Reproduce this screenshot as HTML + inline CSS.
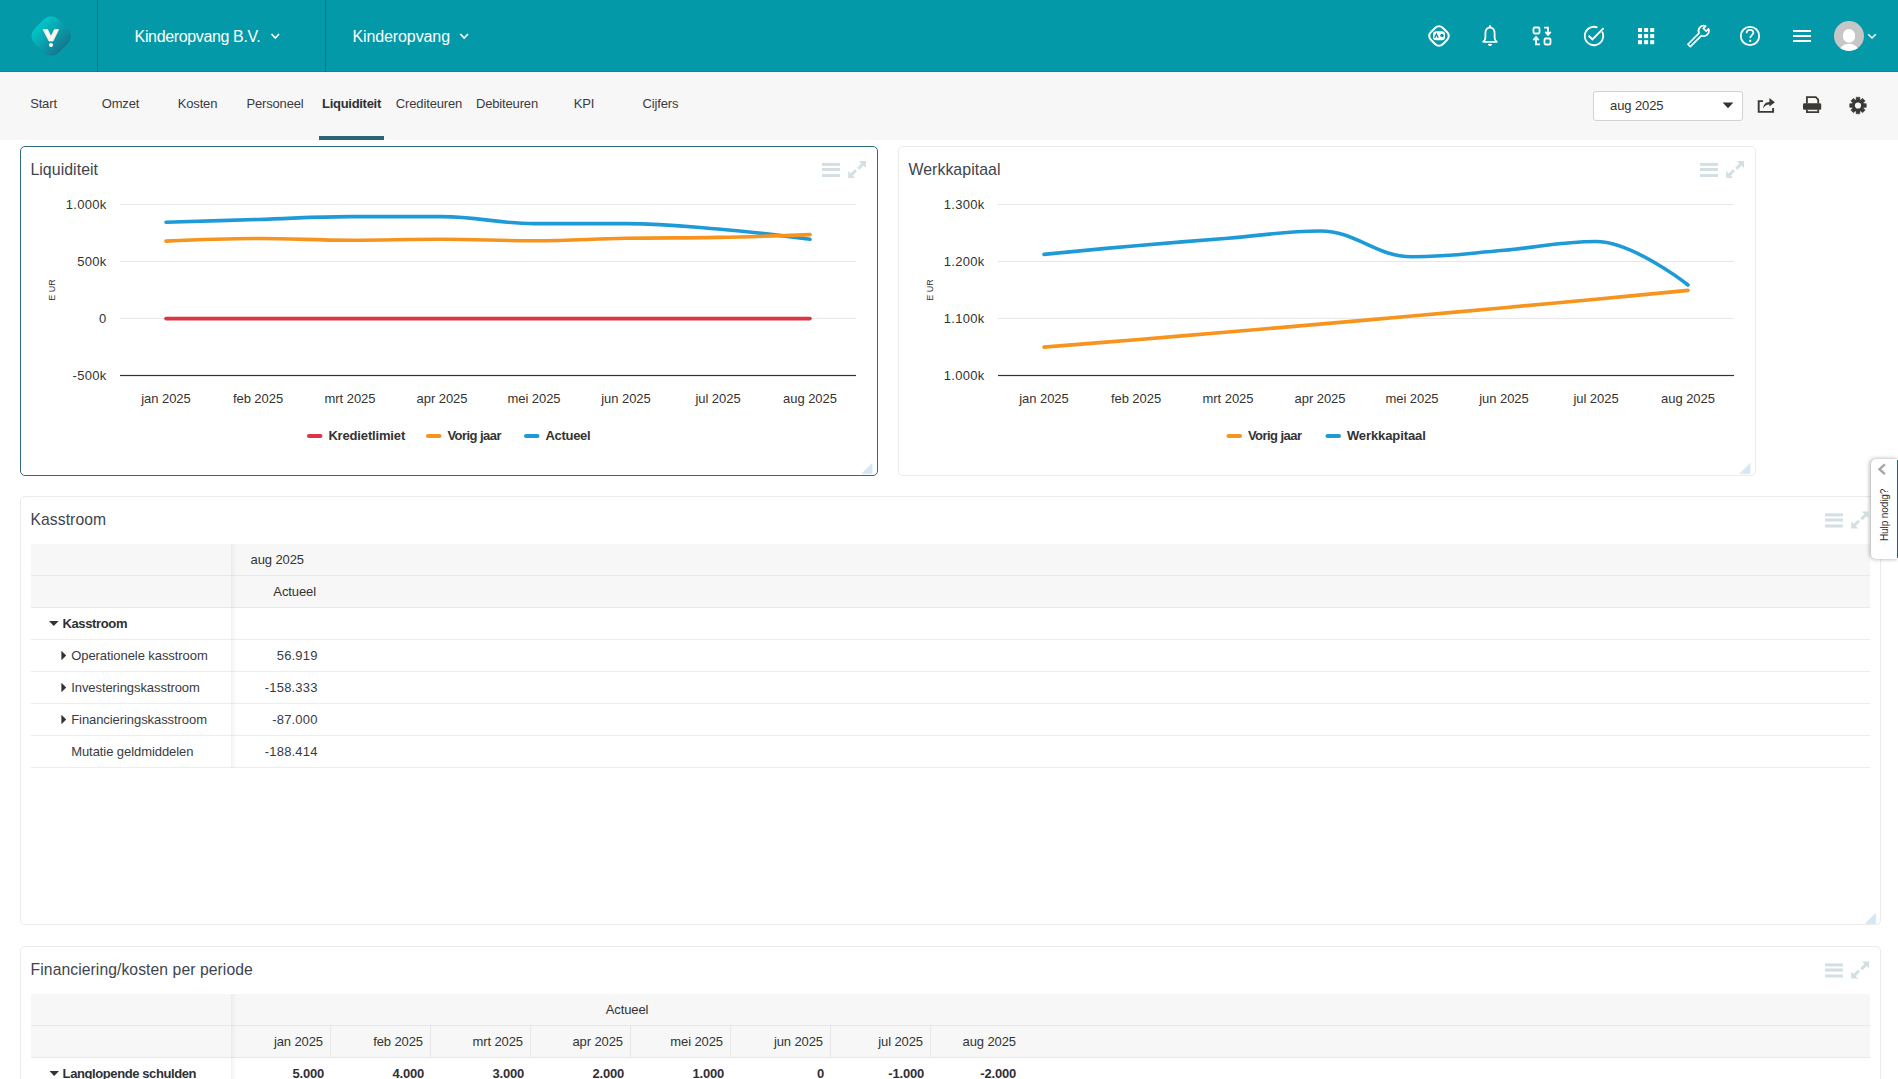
<!DOCTYPE html>
<html><head><meta charset="utf-8"><title>Liquiditeit</title>
<style>
html,body{margin:0;padding:0;width:1898px;height:1079px;overflow:hidden;background:#fff;font-family:"Liberation Sans", sans-serif;}
svg text{font-family:"Liberation Sans", sans-serif;}
</style></head><body>
<div style="position:absolute;left:0px;top:0px;width:1898px;height:72px;background:#0399A9"></div>
<div style="position:absolute;left:0px;top:71px;width:1898px;height:1px;background:#058C9B"></div>
<div style="position:absolute;left:97px;top:0px;width:1px;height:72px;background:#087585"></div>
<div style="position:absolute;left:325px;top:0px;width:1px;height:72px;background:#087585"></div>
<div style="position:absolute;left:0px;top:72px;width:1898px;height:68px;background:#F7F7F7"></div>
<div style="position:absolute;left:319px;top:136px;width:65px;height:4px;background:#2B6572"></div>
<div style="position:absolute;left:1593px;top:91px;width:150px;height:30px;background:#fff;border:1px solid #D2D2D2;border-radius:3px;box-sizing:border-box"></div>
<div style="position:absolute;left:20px;top:146px;width:858px;height:330px;border:1px solid #2F6C7B;border-radius:5px;box-sizing:border-box;background:#fff"></div>
<div style="position:absolute;left:898px;top:146px;width:858px;height:330px;border:1px solid #EBEBEB;border-radius:5px;box-sizing:border-box;background:#fff"></div>
<div style="position:absolute;left:20px;top:496px;width:1861px;height:429px;border:1px solid #EBEBEB;border-radius:5px;box-sizing:border-box;background:#fff"></div>
<div style="position:absolute;left:20px;top:946px;width:1861px;height:200px;border:1px solid #EBEBEB;border-radius:5px;box-sizing:border-box;background:#fff"></div>
<div style="position:absolute;left:31px;top:544px;width:1839px;height:64px;background:#F7F7F7"></div>
<div style="position:absolute;left:31px;top:575px;width:1839px;height:1px;background:#E8E8E8"></div>
<div style="position:absolute;left:31px;top:607px;width:1839px;height:1px;background:#E8E8E8"></div>
<div style="position:absolute;left:31px;top:639px;width:1839px;height:1px;background:#EDEDED"></div>
<div style="position:absolute;left:31px;top:671px;width:1839px;height:1px;background:#EDEDED"></div>
<div style="position:absolute;left:31px;top:703px;width:1839px;height:1px;background:#EDEDED"></div>
<div style="position:absolute;left:31px;top:735px;width:1839px;height:1px;background:#EDEDED"></div>
<div style="position:absolute;left:31px;top:767px;width:1839px;height:1px;background:#EDEDED"></div>
<div style="position:absolute;left:231px;top:544px;width:6px;height:224px;background:linear-gradient(to right,rgba(0,0,0,0.055),rgba(0,0,0,0.025) 40%,rgba(0,0,0,0))"></div>
<div style="position:absolute;left:31px;top:994px;width:1839px;height:64px;background:#F7F7F7"></div>
<div style="position:absolute;left:31px;top:1025px;width:1839px;height:1px;background:#E8E8E8"></div>
<div style="position:absolute;left:31px;top:1057px;width:1839px;height:1px;background:#E8E8E8"></div>
<div style="position:absolute;left:231px;top:994px;width:6px;height:90px;background:linear-gradient(to right,rgba(0,0,0,0.055),rgba(0,0,0,0.025) 40%,rgba(0,0,0,0))"></div>
<div style="position:absolute;left:330px;top:1026px;width:1px;height:31px;background:#E8E8E8"></div>
<div style="position:absolute;left:430px;top:1026px;width:1px;height:31px;background:#E8E8E8"></div>
<div style="position:absolute;left:530px;top:1026px;width:1px;height:31px;background:#E8E8E8"></div>
<div style="position:absolute;left:630px;top:1026px;width:1px;height:31px;background:#E8E8E8"></div>
<div style="position:absolute;left:730px;top:1026px;width:1px;height:31px;background:#E8E8E8"></div>
<div style="position:absolute;left:830px;top:1026px;width:1px;height:31px;background:#E8E8E8"></div>
<div style="position:absolute;left:930px;top:1026px;width:1px;height:31px;background:#E8E8E8"></div>
<div style="position:absolute;left:1871px;top:459px;width:27px;height:100px;background:#fff;border-radius:5px 0 0 5px;box-shadow:-1px 0 4px rgba(0,0,0,0.35)"></div>
<div style="position:absolute;left:1896.5px;top:460px;width:1.5px;height:98px;background:#1C6574"></div>
<svg style="position:absolute;left:0;top:0" width="1898" height="1079" viewBox="0 0 1898 1079">
<defs>
<linearGradient id="lg" x1="0" y1="0" x2="1" y2="0">
<stop offset="0" stop-color="#00C6C8"/><stop offset="1" stop-color="#14788F"/></linearGradient>
</defs>
<rect x="34" y="19" width="34" height="34" rx="10.5" transform="rotate(45 51 36.2)" fill="url(#lg)"/>
<path d="M43.2 29.6 H47.6 L51 36.6 L54.4 29.6 H58.6 L53 41 H49 Z" fill="#FBF6EE" stroke="#FBF6EE" stroke-width="0.8" stroke-linejoin="round"/>
<circle cx="51" cy="45" r="2.1" fill="#FBF6EE"/>
<text x="134.6" y="42" font-size="16" fill="#fff" text-anchor="start" font-weight="normal" letter-spacing="-0.36" >Kinderopvang B.V.</text>
<polyline points="271.5,34 275.3,38 279,34" fill="none" stroke="#fff" stroke-width="1.6"/>
<text x="352.4" y="42" font-size="16" fill="#fff" text-anchor="start" font-weight="normal" letter-spacing="-0.1" >Kinderopvang</text>
<polyline points="460.3,34 464.2,38 468,34" fill="none" stroke="#fff" stroke-width="1.6"/>
<rect x="1430.6" y="27.6" width="16.8" height="16.8" rx="5.2" transform="rotate(45 1439 36)" fill="none" stroke="#fff" stroke-width="2"/>
<rect x="1433" y="31.2" width="12" height="9" rx="3.2" fill="#fff"/>
<polyline points="1434.6,37.9 1436.4,34.1 1438.2,37.9" fill="none" stroke="#0399A9" stroke-width="1.3"/>
<circle cx="1442" cy="35.5" r="1.8" fill="#0399A9"/>
<path d="M1490 27.6 C1487.1 27.6 1485.4 30 1485.4 33.6 V37.4 C1485.4 39.6 1484.4 40.9 1483.2 41.8 H1496.8 C1495.6 40.9 1494.6 39.6 1494.6 37.4 V33.6 C1494.6 30 1492.9 27.6 1490 27.6 Z" fill="none" stroke="#fff" stroke-width="1.8" stroke-linejoin="round"/>
<circle cx="1490" cy="26.5" r="1.2" fill="#fff"/>
<path d="M1488 44.4 H1492 L1490 45.9 Z" fill="#fff" stroke="#fff" stroke-width="1" stroke-linejoin="round"/>
<rect x="1533.5" y="27.5" width="6" height="6" rx="1.2" fill="none" stroke="#fff" stroke-width="1.8"/>
<rect x="1544.5" y="38.5" width="6" height="6" rx="1.2" fill="none" stroke="#fff" stroke-width="1.8"/>
<path d="M1544 27.6 H1548 V33.5" fill="none" stroke="#fff" stroke-width="1.8"/>
<path d="M1545.3 31.8 L1548 34.8 L1550.7 31.8" fill="none" stroke="#fff" stroke-width="1.8"/>
<path d="M1540 44.4 H1536 V38.5" fill="none" stroke="#fff" stroke-width="1.8"/>
<path d="M1533.3 40.2 L1536 37.2 L1538.7 40.2" fill="none" stroke="#fff" stroke-width="1.8"/>
<path d="M1602.12 31.68 A9.2 9.2 0 1 1 1597.45 27.47" fill="none" stroke="#fff" stroke-width="1.8"/>
<polyline points="1588.6,35.6 1592.4,39.4 1603.6,28.2" fill="none" stroke="#fff" stroke-width="1.9"/>
<rect x="1638.0" y="28.0" width="4" height="4" fill="#fff"/>
<rect x="1638.0" y="34.1" width="4" height="4" fill="#fff"/>
<rect x="1638.0" y="40.2" width="4" height="4" fill="#fff"/>
<rect x="1644.1" y="28.0" width="4" height="4" fill="#fff"/>
<rect x="1644.1" y="34.1" width="4" height="4" fill="#fff"/>
<rect x="1644.1" y="40.2" width="4" height="4" fill="#fff"/>
<rect x="1650.2" y="28.0" width="4" height="4" fill="#fff"/>
<rect x="1650.2" y="34.1" width="4" height="4" fill="#fff"/>
<rect x="1650.2" y="40.2" width="4" height="4" fill="#fff"/>
<g transform="translate(1703.7 30.9) rotate(45)"><path d="M-1.7 20.6 V4.9 A5.2 5.2 0 0 1 -2 -4.8 V-1.5 H2 V-4.8 A5.2 5.2 0 0 1 1.7 4.9 V20.6 Z" fill="none" stroke="#fff" stroke-width="1.7" stroke-linejoin="round"/></g>
<circle cx="1750" cy="36" r="9.2" fill="none" stroke="#fff" stroke-width="1.8"/>
<path d="M1746.6 33.2 C1746.6 31 1748.2 29.8 1750 29.8 C1752 29.8 1753.4 31.1 1753.4 32.8 C1753.4 35 1750.2 35.4 1750.2 38" fill="none" stroke="#fff" stroke-width="1.7"/>
<rect x="1749.2" y="39.8" width="2" height="2" fill="#fff"/>
<rect x="1793" y="30" width="18" height="2" fill="#fff"/>
<rect x="1793" y="35" width="18" height="2" fill="#fff"/>
<rect x="1793" y="40" width="18" height="2" fill="#fff"/>
<clipPath id="av"><circle cx="1849" cy="36" r="15"/></clipPath>
<circle cx="1849" cy="36" r="15" fill="#C6C6C6"/>
<g clip-path="url(#av)"><ellipse cx="1849" cy="35.9" rx="6.2" ry="6.9" fill="#fff"/><ellipse cx="1849" cy="51.6" rx="9.6" ry="7.8" fill="#fff"/></g>
<polyline points="1868.2,34.2 1872,38 1875.8,34.2" fill="none" stroke="#fff" stroke-width="1.5"/>
<text x="43.5" y="108.2" font-size="13" fill="#3A3B42" text-anchor="middle" font-weight="normal" letter-spacing="-0.15" >Start</text>
<text x="120.5" y="108.2" font-size="13" fill="#3A3B42" text-anchor="middle" font-weight="normal" letter-spacing="-0.15" >Omzet</text>
<text x="197.5" y="108.2" font-size="13" fill="#3A3B42" text-anchor="middle" font-weight="normal" letter-spacing="-0.15" >Kosten</text>
<text x="275" y="108.2" font-size="13" fill="#3A3B42" text-anchor="middle" font-weight="normal" letter-spacing="-0.15" >Personeel</text>
<text x="351.5" y="108.2" font-size="13" fill="#2F3036" text-anchor="middle" font-weight="bold" letter-spacing="-0.28" >Liquiditeit</text>
<text x="429" y="108.2" font-size="13" fill="#3A3B42" text-anchor="middle" font-weight="normal" letter-spacing="-0.15" >Crediteuren</text>
<text x="507" y="108.2" font-size="13" fill="#3A3B42" text-anchor="middle" font-weight="normal" letter-spacing="-0.15" >Debiteuren</text>
<text x="584" y="108.2" font-size="13" fill="#3A3B42" text-anchor="middle" font-weight="normal" letter-spacing="-0.15" >KPI</text>
<text x="660.5" y="108.2" font-size="13" fill="#3A3B42" text-anchor="middle" font-weight="normal" letter-spacing="-0.15" >Cijfers</text>
<text x="1610" y="110" font-size="13" fill="#333" text-anchor="start" font-weight="normal" letter-spacing="-0.1" >aug 2025</text>
<path d="M1722.6 102.6 H1733.4 L1728 108.2 Z" fill="#333"/>
<path d="M1763 101.1 H1758.7 V111.9 H1773.1 V108" fill="none" stroke="#3B3A34" stroke-width="1.9"/>
<path d="M1763.2 108.4 C1763.4 104.4 1765.6 102.3 1769.4 102 V98 L1774.9 102.3 L1769.4 106.6 V104.4 C1766.6 104.5 1764.6 105.8 1763.2 108.4 Z" fill="#3B3A34"/>
<path d="M1806.9 103.6 V97.2 H1815.8 L1818.2 99.6 V103.6" fill="none" stroke="#3B3A34" stroke-width="1.8" stroke-linejoin="miter"/>
<rect x="1803" y="103.2" width="18.2" height="6.6" rx="1.4" fill="#3B3A34"/>
<path d="M1806.9 109.4 V112.2 H1818.2 V109.4" fill="none" stroke="#3B3A34" stroke-width="1.8"/>
<polygon points="1856.05,99.83 1856.16,97.20 1859.84,97.20 1859.95,99.83 1860.63,100.11 1862.57,98.33 1865.17,100.93 1863.39,102.87 1863.67,103.55 1866.30,103.66 1866.30,107.34 1863.67,107.45 1863.39,108.13 1865.17,110.07 1862.57,112.67 1860.63,110.89 1859.95,111.17 1859.84,113.80 1856.16,113.80 1856.05,111.17 1855.37,110.89 1853.43,112.67 1850.83,110.07 1852.61,108.13 1852.33,107.45 1849.70,107.34 1849.70,103.66 1852.33,103.55 1852.61,102.87 1850.83,100.93 1853.43,98.33 1855.37,100.11" fill="#3B3A34" stroke="#3B3A34" stroke-width="0.5" stroke-linejoin="round"/>
<circle cx="1858" cy="105.5" r="3.1" fill="#F7F7F7"/>
<text x="30.4" y="175" font-size="15.9" fill="#3E4450" text-anchor="start" font-weight="normal" letter-spacing="0.05" >Liquiditeit</text>
<rect x="822" y="162.9" width="18" height="3" fill="#D3DFE2"/>
<rect x="822" y="168.0" width="18" height="3" fill="#D3DFE2"/>
<rect x="822" y="174.0" width="18" height="3" fill="#D3DFE2"/>
<g transform="translate(0 0.0)" fill="#D3DFE2"><path d="M858.9 161 H866 V168 Z"/><path d="M848.2 171 V178 H855.2 Z"/><path d="M863.6 163.4 L858.3 168.7 M850.6 175.6 L855.9 170.3" stroke="#D3DFE2" stroke-width="3"/></g>
<text x="106.6" y="209.0" font-size="13" fill="#333" text-anchor="end" font-weight="normal" letter-spacing="0.3" >1.000k</text>
<rect x="120" y="203.9" width="736" height="1" fill="#E6E6E6"/>
<text x="106.6" y="266.0" font-size="13" fill="#333" text-anchor="end" font-weight="normal" letter-spacing="0.3" >500k</text>
<rect x="120" y="260.9" width="736" height="1" fill="#E6E6E6"/>
<text x="106.6" y="323.0" font-size="13" fill="#333" text-anchor="end" font-weight="normal" letter-spacing="0.3" >0</text>
<rect x="120" y="317.9" width="736" height="1" fill="#E6E6E6"/>
<text x="106.6" y="380.0" font-size="13" fill="#333" text-anchor="end" font-weight="normal" letter-spacing="0.3" >-500k</text>
<rect x="120" y="374.9" width="736" height="1.2" fill="#333"/>
<text transform="translate(55.2 290) rotate(-90)" font-size="9" fill="#333" text-anchor="middle" letter-spacing="0">E UR</text>
<text x="166" y="403" font-size="13" fill="#333" text-anchor="middle" font-weight="normal" letter-spacing="-0.05" >jan 2025</text>
<text x="258" y="403" font-size="13" fill="#333" text-anchor="middle" font-weight="normal" letter-spacing="-0.05" >feb 2025</text>
<text x="350" y="403" font-size="13" fill="#333" text-anchor="middle" font-weight="normal" letter-spacing="-0.05" >mrt 2025</text>
<text x="442" y="403" font-size="13" fill="#333" text-anchor="middle" font-weight="normal" letter-spacing="-0.05" >apr 2025</text>
<text x="534" y="403" font-size="13" fill="#333" text-anchor="middle" font-weight="normal" letter-spacing="-0.05" >mei 2025</text>
<text x="626" y="403" font-size="13" fill="#333" text-anchor="middle" font-weight="normal" letter-spacing="-0.05" >jun 2025</text>
<text x="718" y="403" font-size="13" fill="#333" text-anchor="middle" font-weight="normal" letter-spacing="-0.05" >jul 2025</text>
<text x="810" y="403" font-size="13" fill="#333" text-anchor="middle" font-weight="normal" letter-spacing="-0.05" >aug 2025</text>
<path d="M166 318.6 H810" stroke="#DC3545" stroke-width="3.6" stroke-linecap="round"/>
<path d="M 166.0 222.3 C 166.0 222.3 221.2 220.6 258.0 219.5 C 294.8 218.4 313.2 216.6 350.0 216.6 C 386.8 216.6 405.2 216.6 442.0 216.6 C 478.8 216.6 497.2 223.6 534.0 223.6 C 570.8 223.6 589.2 223.6 626.0 223.6 C 662.8 223.6 681.2 225.9 718.0 229.0 C 754.8 232.1 810.0 239.3 810.0 239.3" fill="none" stroke="#1E9BD7" stroke-width="3.6" stroke-linecap="round"/>
<path d="M 166.0 241.1 C 166.0 241.1 221.2 238.5 258.0 238.5 C 294.8 238.5 313.2 240.2 350.0 240.2 C 386.8 240.2 405.2 239.3 442.0 239.3 C 478.8 239.3 497.2 240.7 534.0 240.7 C 570.8 240.7 589.2 239.0 626.0 238.3 C 662.8 237.6 681.2 238.1 718.0 237.4 C 754.8 236.7 810.0 234.6 810.0 234.6" fill="none" stroke="#F7941D" stroke-width="3.6" stroke-linecap="round"/>
<path d="M309 435.9 H320.5" stroke="#DC3545" stroke-width="4" stroke-linecap="round"/>
<text x="328.4" y="440.2" font-size="13" fill="#333" text-anchor="start" font-weight="bold" letter-spacing="-0.16" >Kredietlimiet</text>
<path d="M428 435.9 H439.5" stroke="#F7941D" stroke-width="4" stroke-linecap="round"/>
<text x="447.4" y="440.2" font-size="13" fill="#333" text-anchor="start" font-weight="bold" letter-spacing="-0.55" >Vorig jaar</text>
<path d="M526 435.9 H537.5" stroke="#1E9BD7" stroke-width="4" stroke-linecap="round"/>
<text x="545.4" y="440.2" font-size="13" fill="#333" text-anchor="start" font-weight="bold" letter-spacing="-0.28" >Actueel</text>
<path d="M872 463.6 V473.6 H862 Z" fill="#D3E7F5" stroke="#D3E7F5" stroke-width="0.8" stroke-linejoin="round"/>
<text x="908.4" y="175" font-size="15.9" fill="#3E4450" text-anchor="start" font-weight="normal" letter-spacing="0.05" >Werkkapitaal</text>
<rect x="1700" y="162.9" width="18" height="3" fill="#D3DFE2"/>
<rect x="1700" y="168.0" width="18" height="3" fill="#D3DFE2"/>
<rect x="1700" y="174.0" width="18" height="3" fill="#D3DFE2"/>
<g transform="translate(878 0.0)" fill="#D3DFE2"><path d="M858.9 161 H866 V168 Z"/><path d="M848.2 171 V178 H855.2 Z"/><path d="M863.6 163.4 L858.3 168.7 M850.6 175.6 L855.9 170.3" stroke="#D3DFE2" stroke-width="3"/></g>
<text x="984.6" y="209.0" font-size="13" fill="#333" text-anchor="end" font-weight="normal" letter-spacing="0.3" >1.300k</text>
<rect x="998" y="203.9" width="736" height="1" fill="#E6E6E6"/>
<text x="984.6" y="266.0" font-size="13" fill="#333" text-anchor="end" font-weight="normal" letter-spacing="0.3" >1.200k</text>
<rect x="998" y="260.9" width="736" height="1" fill="#E6E6E6"/>
<text x="984.6" y="323.0" font-size="13" fill="#333" text-anchor="end" font-weight="normal" letter-spacing="0.3" >1.100k</text>
<rect x="998" y="317.9" width="736" height="1" fill="#E6E6E6"/>
<text x="984.6" y="380.0" font-size="13" fill="#333" text-anchor="end" font-weight="normal" letter-spacing="0.3" >1.000k</text>
<rect x="998" y="374.9" width="736" height="1.2" fill="#333"/>
<text transform="translate(933.2 290) rotate(-90)" font-size="9" fill="#333" text-anchor="middle" letter-spacing="0">E UR</text>
<text x="1044" y="403" font-size="13" fill="#333" text-anchor="middle" font-weight="normal" letter-spacing="-0.05" >jan 2025</text>
<text x="1136" y="403" font-size="13" fill="#333" text-anchor="middle" font-weight="normal" letter-spacing="-0.05" >feb 2025</text>
<text x="1228" y="403" font-size="13" fill="#333" text-anchor="middle" font-weight="normal" letter-spacing="-0.05" >mrt 2025</text>
<text x="1320" y="403" font-size="13" fill="#333" text-anchor="middle" font-weight="normal" letter-spacing="-0.05" >apr 2025</text>
<text x="1412" y="403" font-size="13" fill="#333" text-anchor="middle" font-weight="normal" letter-spacing="-0.05" >mei 2025</text>
<text x="1504" y="403" font-size="13" fill="#333" text-anchor="middle" font-weight="normal" letter-spacing="-0.05" >jun 2025</text>
<text x="1596" y="403" font-size="13" fill="#333" text-anchor="middle" font-weight="normal" letter-spacing="-0.05" >jul 2025</text>
<text x="1688" y="403" font-size="13" fill="#333" text-anchor="middle" font-weight="normal" letter-spacing="-0.05" >aug 2025</text>
<path d="M 1044.0 254.4 C 1044.0 254.4 1099.2 248.9 1136.0 245.7 C 1172.8 242.5 1191.2 241.2 1228.0 238.3 C 1264.8 235.4 1283.2 231.0 1320.0 231.0 C 1356.8 231.0 1375.2 256.8 1412.0 256.8 C 1448.8 256.8 1467.2 253.4 1504.0 250.3 C 1540.8 247.2 1559.2 241.5 1596.0 241.5 C 1632.8 241.5 1688.0 285.0 1688.0 285.0" fill="none" stroke="#1E9BD7" stroke-width="3.6" stroke-linecap="round"/>
<path d="M 1044.0 347.1 C 1044.0 347.1 1099.2 342.7 1136.0 339.7 C 1172.8 336.6 1191.2 335.1 1228.0 332.0 C 1264.8 328.9 1283.2 327.3 1320.0 324.1 C 1356.8 320.9 1375.2 319.3 1412.0 316.0 C 1448.8 312.7 1467.2 311.1 1504.0 307.7 C 1540.8 304.3 1559.2 302.6 1596.0 299.2 C 1632.8 295.7 1688.0 290.4 1688.0 290.4" fill="none" stroke="#F7941D" stroke-width="3.6" stroke-linecap="round"/>
<path d="M1228.5 435.9 H1240.0" stroke="#F7941D" stroke-width="4" stroke-linecap="round"/>
<text x="1247.9" y="440.2" font-size="13" fill="#333" text-anchor="start" font-weight="bold" letter-spacing="-0.55" >Vorig jaar</text>
<path d="M1327.5 435.9 H1339.0" stroke="#1E9BD7" stroke-width="4" stroke-linecap="round"/>
<text x="1346.9" y="440.2" font-size="13" fill="#333" text-anchor="start" font-weight="bold" letter-spacing="-0.1" >Werkkapitaal</text>
<path d="M1750 463.6 V473.6 H1740 Z" fill="#D3E7F5" stroke="#D3E7F5" stroke-width="0.8" stroke-linejoin="round"/>
<text x="30.4" y="525" font-size="15.7" fill="#3E4450" text-anchor="start" font-weight="normal" letter-spacing="0.1" >Kasstroom</text>
<rect x="1825" y="513.4" width="18" height="3" fill="#D3DFE2"/>
<rect x="1825" y="518.5" width="18" height="3" fill="#D3DFE2"/>
<rect x="1825" y="524.5" width="18" height="3" fill="#D3DFE2"/>
<g transform="translate(1003 350.5)" fill="#D3DFE2"><path d="M858.9 161 H866 V168 Z"/><path d="M848.2 171 V178 H855.2 Z"/><path d="M863.6 163.4 L858.3 168.7 M850.6 175.6 L855.9 170.3" stroke="#D3DFE2" stroke-width="3"/></g>
<path d="M1875.6 913.4 V923.4 H1865.6 Z" fill="#D3E7F5" stroke="#D3E7F5" stroke-width="0.8" stroke-linejoin="round"/>
<text x="250.5" y="564" font-size="13" fill="#333" text-anchor="start" font-weight="normal" letter-spacing="-0.1" >aug 2025</text>
<text x="316" y="596" font-size="13" fill="#333" text-anchor="end" font-weight="normal" letter-spacing="-0.1" >Actueel</text>
<path d="M49 621 H58.6 L53.8 626 Z" fill="#333"/>
<text x="62.4" y="628" font-size="13" fill="#2F3036" text-anchor="start" font-weight="bold" letter-spacing="-0.35" >Kasstroom</text>
<path d="M61.4 650.7 V660.3 L66.2 655.5 Z" fill="#333"/>
<text x="71.2" y="660" font-size="13" fill="#3A3B42" text-anchor="start" font-weight="normal" letter-spacing="-0.07" >Operationele kasstroom</text>
<text x="317.6" y="660" font-size="13" fill="#3A3B42" text-anchor="end" font-weight="normal" letter-spacing="0.18" >56.919</text>
<path d="M61.4 682.7 V692.3 L66.2 687.5 Z" fill="#333"/>
<text x="71.2" y="692" font-size="13" fill="#3A3B42" text-anchor="start" font-weight="normal" letter-spacing="-0.07" >Investeringskasstroom</text>
<text x="317.6" y="692" font-size="13" fill="#3A3B42" text-anchor="end" font-weight="normal" letter-spacing="0.18" >-158.333</text>
<path d="M61.4 714.7 V724.3 L66.2 719.5 Z" fill="#333"/>
<text x="71.2" y="724" font-size="13" fill="#3A3B42" text-anchor="start" font-weight="normal" letter-spacing="-0.07" >Financieringskasstroom</text>
<text x="317.6" y="724" font-size="13" fill="#3A3B42" text-anchor="end" font-weight="normal" letter-spacing="0.18" >-87.000</text>
<text x="71.2" y="756" font-size="13" fill="#3A3B42" text-anchor="start" font-weight="normal" letter-spacing="-0.07" >Mutatie geldmiddelen</text>
<text x="317.6" y="756" font-size="13" fill="#3A3B42" text-anchor="end" font-weight="normal" letter-spacing="0.18" >-188.414</text>
<text x="30.6" y="975" font-size="15.7" fill="#3E4450" text-anchor="start" font-weight="normal" letter-spacing="0.08" >Financiering/kosten per periode</text>
<rect x="1825" y="963.4" width="18" height="3" fill="#D3DFE2"/>
<rect x="1825" y="968.5" width="18" height="3" fill="#D3DFE2"/>
<rect x="1825" y="974.5" width="18" height="3" fill="#D3DFE2"/>
<g transform="translate(1003 800.5)" fill="#D3DFE2"><path d="M858.9 161 H866 V168 Z"/><path d="M848.2 171 V178 H855.2 Z"/><path d="M863.6 163.4 L858.3 168.7 M850.6 175.6 L855.9 170.3" stroke="#D3DFE2" stroke-width="3"/></g>
<text x="627" y="1014" font-size="13" fill="#333" text-anchor="middle" font-weight="normal" letter-spacing="-0.1" >Actueel</text>
<text x="323" y="1046" font-size="13" fill="#333" text-anchor="end" font-weight="normal" letter-spacing="-0.1" >jan 2025</text>
<text x="324" y="1078" font-size="13" fill="#2F3036" text-anchor="end" font-weight="bold" letter-spacing="-0.2" >5.000</text>
<text x="423" y="1046" font-size="13" fill="#333" text-anchor="end" font-weight="normal" letter-spacing="-0.1" >feb 2025</text>
<text x="424" y="1078" font-size="13" fill="#2F3036" text-anchor="end" font-weight="bold" letter-spacing="-0.2" >4.000</text>
<text x="523" y="1046" font-size="13" fill="#333" text-anchor="end" font-weight="normal" letter-spacing="-0.1" >mrt 2025</text>
<text x="524" y="1078" font-size="13" fill="#2F3036" text-anchor="end" font-weight="bold" letter-spacing="-0.2" >3.000</text>
<text x="623" y="1046" font-size="13" fill="#333" text-anchor="end" font-weight="normal" letter-spacing="-0.1" >apr 2025</text>
<text x="624" y="1078" font-size="13" fill="#2F3036" text-anchor="end" font-weight="bold" letter-spacing="-0.2" >2.000</text>
<text x="723" y="1046" font-size="13" fill="#333" text-anchor="end" font-weight="normal" letter-spacing="-0.1" >mei 2025</text>
<text x="724" y="1078" font-size="13" fill="#2F3036" text-anchor="end" font-weight="bold" letter-spacing="-0.2" >1.000</text>
<text x="823" y="1046" font-size="13" fill="#333" text-anchor="end" font-weight="normal" letter-spacing="-0.1" >jun 2025</text>
<text x="824" y="1078" font-size="13" fill="#2F3036" text-anchor="end" font-weight="bold" letter-spacing="-0.2" >0</text>
<text x="923" y="1046" font-size="13" fill="#333" text-anchor="end" font-weight="normal" letter-spacing="-0.1" >jul 2025</text>
<text x="924" y="1078" font-size="13" fill="#2F3036" text-anchor="end" font-weight="bold" letter-spacing="-0.2" >-1.000</text>
<text x="1016" y="1046" font-size="13" fill="#333" text-anchor="end" font-weight="normal" letter-spacing="-0.1" >aug 2025</text>
<text x="1016" y="1078" font-size="13" fill="#2F3036" text-anchor="end" font-weight="bold" letter-spacing="-0.2" >-2.000</text>
<path d="M49.5 1071 H59 L54.2 1076 Z" fill="#333"/>
<text x="62.6" y="1078" font-size="13" fill="#2F3036" text-anchor="start" font-weight="bold" letter-spacing="-0.4" >Langlopende schulden</text>
<polyline points="1884.9,464.4 1879.5,469.2 1884.9,474.1" fill="none" stroke="#A6A6A6" stroke-width="2.4"/>
<text transform="translate(1887.6 541) rotate(-90)" font-size="10" fill="#333" letter-spacing="-0.1">Hulp nodig?</text>
<text transform="translate(1885 546) rotate(-90)" font-size="6" fill="#bbb">...</text>
</svg>
</body></html>
